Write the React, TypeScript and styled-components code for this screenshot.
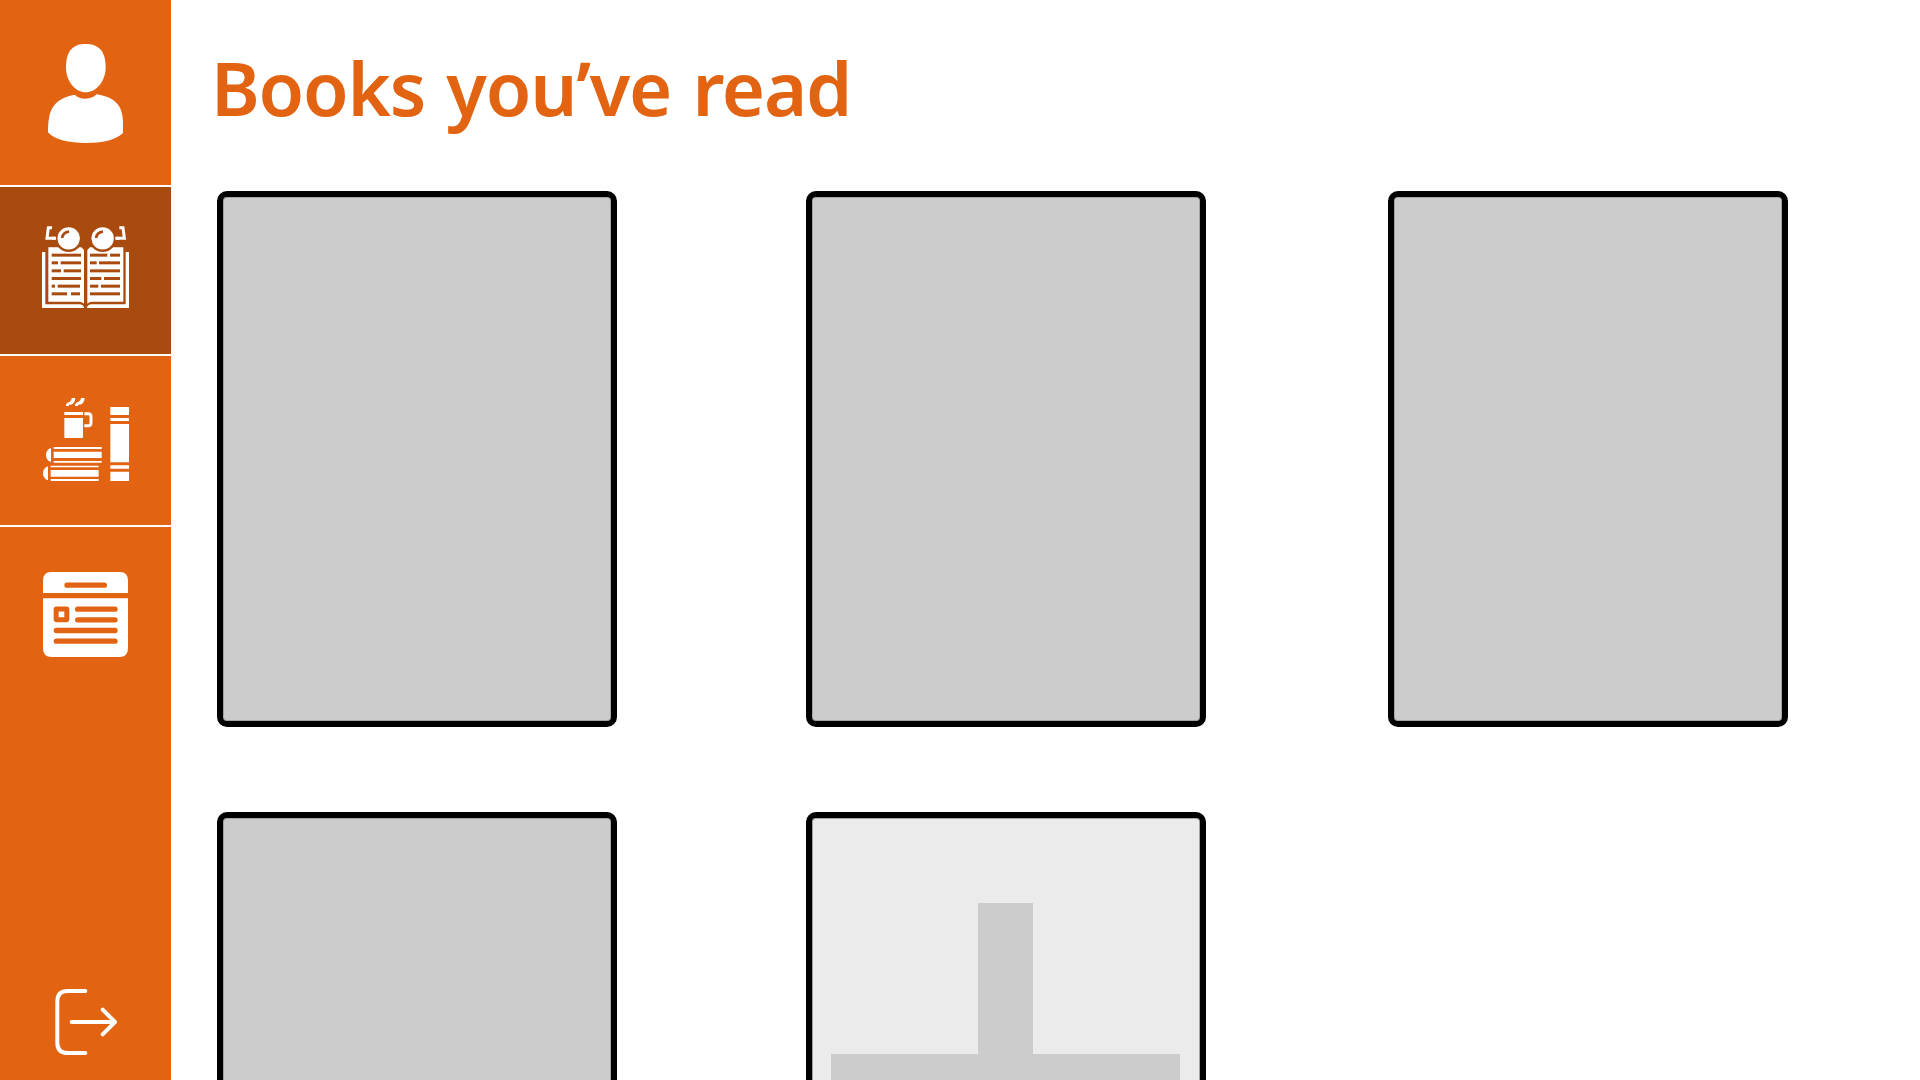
import React from "react";
import styled, { createGlobalStyle } from "styled-components";

const ORANGE = "#e26311";
const RUST = "#a94b0e";

const GlobalStyle = createGlobalStyle`
  body { margin: 0; background: #fff; overflow: hidden; }
  *, *::before, *::after { box-sizing: border-box; }
`;

const Page = styled.div`
  display: flex;
  height: 100vh;
  overflow: hidden;
  background: #fff;
  font-family: "Noto Sans", "Open Sans", sans-serif;
`;

const Sidebar = styled.nav`
  display: flex;
  flex-direction: column;
  flex: 0 0 171px;
  background: ${ORANGE};
`;

const NavItem = styled.button<{ $height: number; $top: number; $active?: boolean; $last?: boolean }>`
  display: flex;
  justify-content: center;
  align-items: flex-start;
  flex: 0 0 ${(p) => p.$height}px;
  width: 100%;
  margin: 0;
  padding: ${(p) => p.$top}px 0 0;
  border: 0;
  border-bottom: ${(p) => (p.$last ? "0" : "2px solid #fff")};
  background: ${(p) => (p.$active ? RUST : ORANGE)};
  cursor: pointer;
`;

const LogoutButton = styled.button`
  display: flex;
  justify-content: center;
  margin: auto 0 0;
  padding: 0 0 24px;
  border: 0;
  background: none;
  cursor: pointer;
`;

const Icon = styled.svg<{ $w: number; $h: number }>`
  display: block;
  flex: none;
  width: ${(p) => p.$w}px;
  height: ${(p) => p.$h}px;
`;

const Content = styled.main`
  flex: 1;
  padding: 38px 132px 0 46px;
`;

const Title = styled.h1`
  margin: 0 0 53px -6px;
  height: 100px;
  line-height: 100px;
  font-size: 74px;
  font-weight: 600;
  letter-spacing: -1.2px;
  word-spacing: 3.2px;
  white-space: nowrap;
  color: ${ORANGE};
`;

const Shelf = styled.section`
  display: grid;
  grid-template-columns: 400px 393px 400px;
  column-gap: 189px;
  row-gap: 85px;
`;

const Book = styled.article`
  width: 400px;
  height: 536px;
  border: 6px solid #000;
  border-radius: 10px;
  background: #ccc;
  box-shadow: inset 0 0 0 1px #a3a3a3;
`;

const AddBook = styled(Book).attrs({ as: "button" })`
  display: grid;
  grid-template-columns: 147px 55px 147px;
  grid-template-rows: 151px 56px 152px;
  place-content: center;
  padding: 5px 1px 0 0;
  background: #ebebeb;
  cursor: pointer;
`;

const PlusStem = styled.span`
  grid-column: 2;
  grid-row: 1 / 4;
  background: #ccc;
`;

const PlusBar = styled.span`
  grid-column: 1 / 4;
  grid-row: 2;
  background: #ccc;
`;

const UserIcon = () => (
  <Icon $w={89} $h={105} viewBox="123 120 267 315" fill="#fff">
    <path d="M257 132C291 132 317 148 317 202C317 246 287 277 257 277C227 277 198 246 198 202C198 148 223 132 257 132Z" />
    <path d="M224 284C240 300 274 300 290 283C337 291 369 310 369 367V399C347 420 307 429 257 429C207 429 165 420 144 397C145 345 148 298 224 284Z" />
  </Icon>
);

const leftLines = [
  [95, 150, 183], [95, 173, 114], [122, 173, 183], [95, 197, 123], [131, 197, 183],
  [95, 220, 183], [95, 243, 105], [113, 243, 180], [95, 266, 141], [153, 266, 180],
];
const rightLines = [
  [210, 150, 262], [270, 150, 300], [210, 173, 230], [237, 173, 300], [210, 197, 300],
  [210, 220, 244], [252, 220, 300], [210, 243, 235], [243, 243, 300], [210, 266, 300],
];

const ReadingIcon = () => (
  <Icon $w={89} $h={84} viewBox="63 60 267 252">
    <path d="M96 68H85L81 100H108M298 68H309L313 100H286" fill="none" stroke="#fff" strokeWidth="9" />
    <path d="M66 141H76V298H180Q188 299 192 306V309H66ZM327 141H317V298H213Q205 299 201 306V309H327Z" fill="#fff" />
    <path d="M85 127H184L192 135V296Q186 290 178 290H85ZM310 127H210L202 135V296Q208 290 216 290H310Z" fill="#fff" />
    <g fill={RUST}>
      <circle cx="146" cy="100" r="41" />
      <circle cx="248" cy="100" r="41" />
    </g>
    <path d="M96 100H108M298 100H286" stroke="#fff" strokeWidth="9" />
    <g fill="#fff">
      <circle cx="146" cy="100" r="33.5" />
      <circle cx="248" cy="100" r="33.5" />
    </g>
    <path d="M126 99Q129 82 147 80M228 99Q231 82 249 80" fill="none" stroke={RUST} strokeWidth="8" />
    <g stroke={RUST} strokeWidth="9">
      {[...leftLines, ...rightLines].map(([x1, y, x2]) => (
        <line key={`${x1}-${y}`} x1={x1} x2={x2} y1={y + 0.5} y2={y + 0.5} />
      ))}
    </g>
  </Icon>
);

const ShelfIcon = () => (
  <Icon $w={89} $h={85} viewBox="63 51 267 255" fill="#fff">
    <path d="M138 78V73Q142 67 149 65Q156 62 155 54H166Q166 65 159 71Q155 74 149 74Q147 74 146 78ZM165 78V73Q169 67 176 65Q183 62 183 54H194Q194 65 187 71Q183 74 177 74Q174 74 173 78Z" />
    <path d="M133 96H189V105H133ZM133 114H189V171Q189 174 186 174H136Q133 174 133 171Z" />
    <path d="M193 101H205Q213 101 213 110V129Q213 137 205 137H193" fill="none" stroke="#fff" strokeWidth="9" />
    <path d="M271 81H327V105H271ZM271 114H327V123H271ZM271 132H327V247H271ZM271 256H327V266H271ZM271 275H327V303H271Z" />
    <path d="M101 201H245V207H101ZM101 215H245V234H101ZM101 243H245V248H101ZM92 257H236V262H92ZM92 270H236V290H92ZM92 297H236V303H92Z" />
    <path d="M93 204V246C73 241 73 209 93 204ZM84 259V301C64 296 64 264 84 259Z" />
  </Icon>
);

const NewsIcon = () => (
  <Icon $w={89} $h={89} viewBox="63 60 267 267">
    <path d="M93 66H300Q324 66 324 92V129H69V92Q69 66 93 66ZM69 145H324V295Q324 321 298 321H95Q69 321 69 295Z" fill="#fff" />
    <path d="M141 105.5H253M173 177.5H285M173 209.5H285M109 241.5H285M109 273.5H285" fill="none" stroke={ORANGE} strokeWidth="16" strokeLinecap="round" />
    <rect x="108.5" y="177" width="32" height="32" rx="1" fill="none" stroke={ORANGE} strokeWidth="15" strokeLinejoin="round" />
  </Icon>
);

const LogoutIcon = () => (
  <Icon $w={65} $h={68} viewBox="99 84 195 204" fill="none" stroke="#fff" strokeWidth="12" strokeLinecap="round" strokeLinejoin="round">
    <path d="M196 93H143Q112 93 112 124V248Q112 279 143 279H196" />
    <path d="M155 186H284M248 149L285 186L248 223" />
  </Icon>
);

export default function App() {
  return (
    <Page>
      <GlobalStyle />
      <Sidebar>
        <NavItem $height={187} $top={40}><UserIcon /></NavItem>
        <NavItem $height={169} $top={38} $active><ReadingIcon /></NavItem>
        <NavItem $height={171} $top={41}><ShelfIcon /></NavItem>
        <NavItem $height={180} $top={43} $last><NewsIcon /></NavItem>
        <LogoutButton><LogoutIcon /></LogoutButton>
      </Sidebar>
      <Content>
        <Title>Books you’ve read</Title>
        <Shelf>
          <Book />
          <Book />
          <Book />
          <Book />
          <AddBook>
            <PlusStem />
            <PlusBar />
          </AddBook>
        </Shelf>
      </Content>
    </Page>
  );
}
